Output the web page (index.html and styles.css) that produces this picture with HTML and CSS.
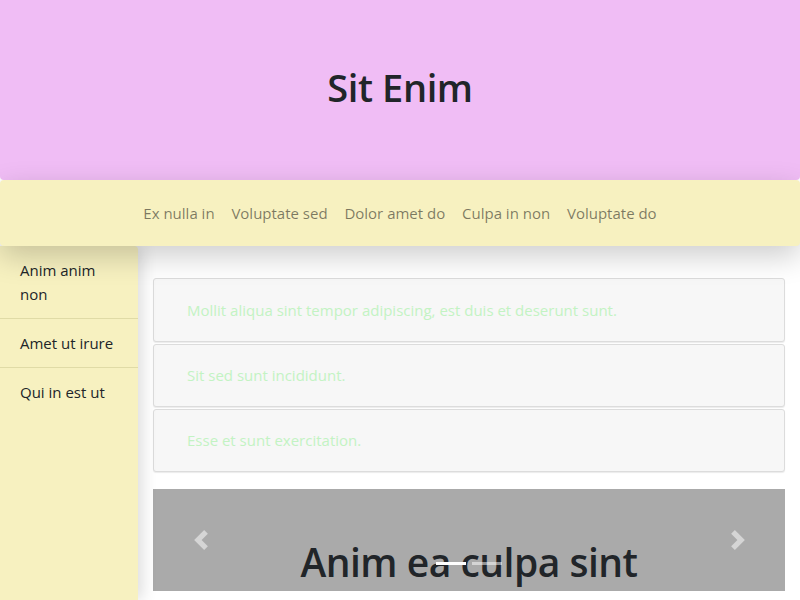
FILE: index.html
```html
<!DOCTYPE html>
<html lang="la">
<head>
<meta charset="utf-8">
<title>Sit Enim</title>
<link rel="stylesheet" href="styles.css">
</head>
<body>
<header class="hero">
  <h1 class="hero-title">Sit Enim</h1>
</header>
<nav class="topnav">
  <a class="topnav-link" href="#">Ex nulla in</a>
  <a class="topnav-link" href="#">Voluptate sed</a>
  <a class="topnav-link" href="#">Dolor amet do</a>
  <a class="topnav-link" href="#">Culpa in non</a>
  <a class="topnav-link" href="#">Voluptate do</a>
</nav>
<div class="layout">
  <aside class="sidebar">
    <a class="side-item" href="#">Anim anim non</a>
    <a class="side-item" href="#">Amet ut irure</a>
    <a class="side-item" href="#">Qui in est ut</a>
  </aside>
  <main class="main">
    <ul class="cards">
      <li class="card">Mollit aliqua sint tempor adipiscing, est duis et deserunt sunt.</li>
      <li class="card">Sit sed sunt incididunt.</li>
      <li class="card">Esse et sunt exercitation.</li>
    </ul>
    <section class="carousel">
      <button class="carousel-ctrl carousel-prev" aria-label="Previous">
        <svg width="20" height="20" viewBox="0 0 8 8"><path fill="rgba(255,255,255,0.5)" d="M5.25 0l-4 4 4 4 1.5-1.5L4.25 4l2.5-2.5L5.25 0z"/></svg>
      </button>
      <h2 class="carousel-title">Anim ea culpa sint</h2>
      <button class="carousel-ctrl carousel-next" aria-label="Next">
        <svg width="20" height="20" viewBox="0 0 8 8"><path fill="rgba(255,255,255,0.5)" d="M2.75 0l-1.5 1.5L3.75 4l-2.5 2.5L2.75 8l4-4-4-4z"/></svg>
      </button>
      <ol class="indicators">
        <li class="indicator active"></li>
        <li class="indicator"></li>
      </ol>
    </section>
  </main>
</div>
</body>
</html>
```
FILE: styles.css
```css
* { box-sizing: border-box; }
html, body { margin: 0; padding: 0; }
body {
  font-family: "Open Sans", "Noto Sans", sans-serif;
  color: #212529;
  background: #fff;
  font-size: 16px;
  line-height: 1.5;
  overflow: hidden;
  height: 600px;
}
.hero {
  height: 180px;
  background: #f0bdf5;
  border-radius: 0 0 4px 4px;
  display: flex;
  align-items: center;
  justify-content: center;
  position: relative;
  z-index: 1;
}
.hero-title {
  margin: 0 0 4px;
  font-size: 38px;
  font-weight: 600;
  line-height: 1.2;
  letter-spacing: -0.4px;
}
.topnav {
  height: 66px;
  background: #f7f1c0;
  border-radius: 4px;
  display: flex;
  justify-content: center;
  align-items: center;
  position: relative;
  z-index: 3;
  box-shadow: 0 10px 30px rgba(0, 0, 0, 0.2);
}
.topnav-link {
  color: rgba(0, 0, 0, 0.5);
  text-decoration: none;
  padding: 0 8.4px;
  font-size: 15px;
}
.layout {
  display: flex;
  height: 354px;
}
.sidebar {
  width: 138px;
  flex: none;
  background: #f7f1c0;
  border-radius: 0 4px 0 0;
  position: relative;
  z-index: 2;
  box-shadow: 4px 0 16px rgba(0, 0, 0, 0.14);
  display: flex;
  flex-direction: column;
}
.side-item {
  padding: 12px 20px;
  color: #212529;
  text-decoration: none;
  border-bottom: 1px solid #e0dba6;
  font-size: 15px;
  line-height: 24px;
}
.side-item:last-child { border-bottom: none; }
.main {
  flex: 1;
  padding: 32px 15px 0;
}
.cards {
  list-style: none;
  margin: 0 0 17px;
  padding: 0;
  display: flex;
  flex-direction: column;
  gap: 2px;
}
.card {
  height: 64px;
  display: flex;
  align-items: center;
  padding: 0 33px;
  background: #f7f7f7;
  border: 1px solid #dcdcdc;
  border-radius: 3px;
  box-shadow: 0 1px 1px rgba(0, 0, 0, 0.08);
  color: #c3f3c3;
  font-size: 15px;
}
.card + .card { height: 63px; }
.carousel {
  position: relative;
  height: 102px;
  background: #aaaaaa;
  overflow: hidden;
  text-align: center;
  padding-top: 50px;
}
.carousel-title {
  margin: 0;
  font-size: 39px;
  font-weight: 600;
  line-height: 1.2;
  letter-spacing: -0.5px;
}
.carousel-ctrl {
  position: absolute;
  top: 0;
  bottom: 0;
  width: 95px;
  border: 0;
  background: transparent;
  padding: 0;
  display: flex;
  align-items: center;
  justify-content: center;
}
.carousel-prev { left: 0; }
.carousel-next { right: 0; }
.indicators {
  position: absolute;
  left: 0;
  right: 0;
  top: 73px;
  margin: 0;
  padding: 0;
  list-style: none;
  display: flex;
  justify-content: center;
}
.indicator {
  width: 30px;
  height: 3px;
  margin: 0 3px;
  background: rgba(255, 255, 255, 0.5);
}
.indicator.active { background: #fff; }
```
